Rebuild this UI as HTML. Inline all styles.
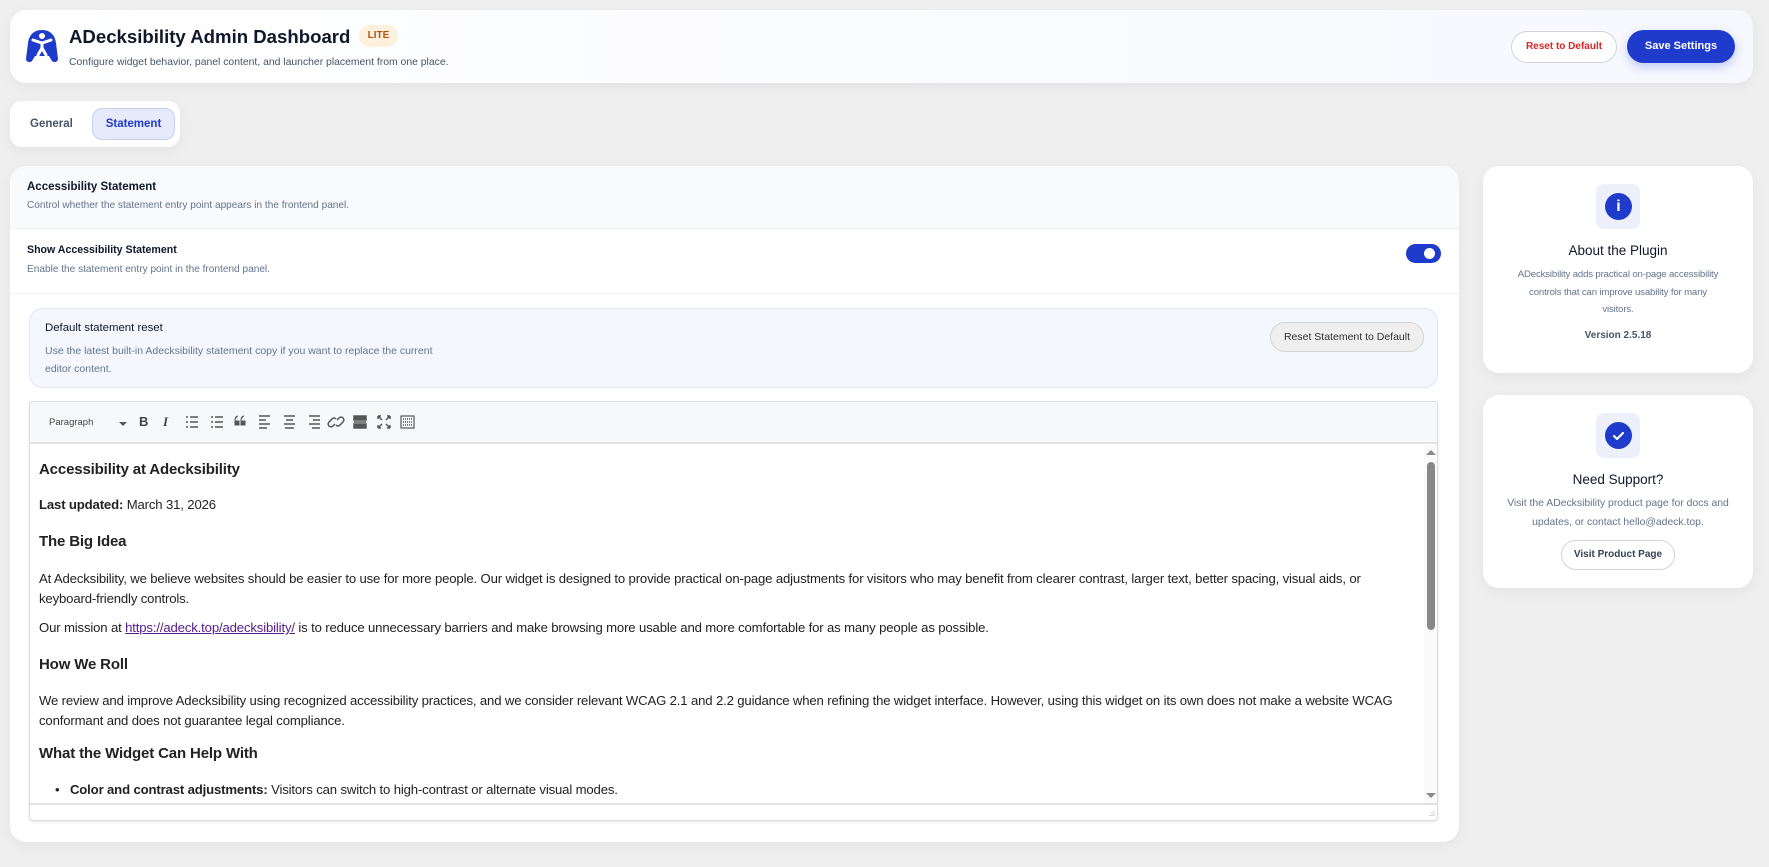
<!DOCTYPE html>
<html><head><meta charset="utf-8"><style>
*{box-sizing:border-box;margin:0;padding:0}
body{width:1769px;height:867px;background:#efefef;font-family:"Liberation Sans",sans-serif;color:#1e293b;position:relative;overflow:hidden}
.abs{position:absolute}
.card{position:absolute;background:#fff;border-radius:16px;box-shadow:0 4px 14px rgba(0,0,0,.05)}
.t{position:absolute;white-space:nowrap}
.ed p,.ed h3,.ed li{position:absolute;left:39px;white-space:nowrap;font-size:13.15px;color:#222;letter-spacing:-.15px}
.ed h3{font-size:15px;font-weight:bold}
</style></head><body>
<!-- header -->
<div class="card" style="left:10px;top:10px;width:1743px;height:73px;background:linear-gradient(90deg,#fff,#f6f8fe)"></div>
<svg class="abs" style="left:26px;top:29px" width="32" height="34" viewBox="0 0 32 34">
<path d="M16 1C7 1 3 7 2 14L0 30c0 3 4 4 6 2l3-5h14l3 5c2 2 6 1 6-2L30 14C29 7 25 1 16 1z" fill="#1f3bcc"/>
<circle cx="16" cy="7" r="3" fill="#fff"/>
<path d="M7 11l9 3 9-3M16 14v6M16 19l-4 7M16 19l4 7" stroke="#fff" stroke-width="3" fill="none" stroke-linecap="round"/>
</svg>
<div class="t" style="left:69px;top:26px;font-size:18.6px;font-weight:bold;color:#0f172a">ADecksibility Admin Dashboard</div>
<div class="abs" style="left:359px;top:25px;width:39px;height:22px;border-radius:12px;background:#fdf0dd;color:#b45309;font-size:10px;font-weight:bold;text-align:center;line-height:22px">LITE</div>
<div class="t" style="left:69px;top:57px;font-size:10.4px;color:#475569">Configure widget behavior, panel content, and launcher placement from one place.</div>
<div class="abs" style="left:1511px;top:31px;width:106px;height:32px;border:1px solid #d1d5db;border-radius:16px;color:#dc2626;font-size:10px;font-weight:bold;text-align:center;line-height:30px;background:#fff">Reset to Default</div>
<div class="abs" style="left:1627px;top:30px;width:108px;height:33px;border-radius:17px;background:#1f3bcc;color:#fff;font-size:11px;font-weight:bold;text-align:center;line-height:33px;box-shadow:0 4px 10px rgba(31,59,204,.25)">Save Settings</div>
<!-- tabs -->
<div class="card" style="left:10px;top:101px;width:170px;height:46px;border-radius:12px"></div>
<div class="t" style="left:30px;top:118px;font-size:11.5px;font-weight:bold;color:#475569">General</div>
<div class="abs" style="left:92px;top:108px;width:83px;height:32px;border-radius:10px;background:#e6eafb;border:1px solid #c7d0f3;color:#1f3bcc;font-size:11.5px;font-weight:bold;text-align:center;line-height:30px">Statement</div>
<!-- main card -->
<div class="card" style="left:10px;top:166px;width:1449px;height:676px;overflow:hidden">
 <div class="abs" style="left:0;top:0;width:1449px;height:63px;background:#f9fafc;border-bottom:1px solid #eef0f3"></div>
 <div class="abs" style="left:0;top:127px;width:1449px;height:1px;background:#eef0f3"></div>
</div>
<div class="t" style="left:27px;top:181px;font-size:11.5px;font-weight:bold;color:#0f172a">Accessibility Statement</div>
<div class="t" style="left:27px;top:200px;font-size:10.1px;color:#64748b">Control whether the statement entry point appears in the frontend panel.</div>
<div class="t" style="left:27px;top:244px;font-size:10.6px;font-weight:bold;color:#0f172a">Show Accessibility Statement</div>
<div class="t" style="left:27px;top:264px;font-size:10.1px;color:#64748b">Enable the statement entry point in the frontend panel.</div>
<div class="abs" style="left:1406px;top:244px;width:35px;height:19px;border-radius:10px;background:#1f3bcc"></div>
<div class="abs" style="left:1424px;top:248px;width:11px;height:11px;border-radius:50%;background:#fff"></div>
<div class="abs" style="left:29px;top:308px;width:1409px;height:80px;border-radius:14px;background:#f4f7fe;border:1px solid #dce4fb"></div>
<div class="t" style="left:45px;top:322px;font-size:11.4px;color:#0f172a">Default statement reset</div>
<div class="t" style="left:45px;top:342px;font-size:10.5px;color:#64748b;line-height:18px">Use the latest built-in Adecksibility statement copy if you want to replace the current<br>editor content.</div>
<div class="abs" style="left:1270px;top:322px;width:154px;height:30px;border-radius:15px;background:#efefef;border:1px solid #d4d4d4;font-size:10.5px;color:#333;text-align:center;line-height:28px">Reset Statement to Default</div>
<!-- editor -->
<div class="abs" style="left:29px;top:401px;width:1409px;height:420px;border:1px solid #dcdcdc;border-radius:4px;background:#fff;overflow:hidden;box-shadow:0 1px 2px rgba(0,0,0,.1)">
 <div class="abs" style="left:0;top:0;width:1409px;height:42px;background:#f7f8fa;border-bottom:2px solid #e2e2e2"></div>
 <div class="abs" style="left:0;top:401px;width:1409px;height:19px;border-top:2px solid #e2e2e2"></div>
 <div class="abs" style="left:1394px;top:43px;width:14px;height:358px;background:#fafafa"></div>
 <div class="abs" style="left:1397px;top:60px;width:8px;height:168px;border-radius:4px;background:#888"></div>
 <div class="abs" style="left:1396px;top:48px;border:5px solid transparent;border-bottom:5px solid #888;border-top:0"></div>
 <div class="abs" style="left:1396px;top:391px;border:5px solid transparent;border-top:5px solid #888;border-bottom:0"></div>
 <svg class="abs" style="left:1396px;top:407px" width="10" height="10"><path d="M8 2v1M6 4v1M8 4v1M4 6v1M6 6v1M8 6v1" stroke="#aaa"/></svg>
</div>
<div class="t" style="left:49px;top:417px;font-size:9.5px;color:#444">Paragraph</div>
<div class="abs" style="left:119px;top:422px;border:4px solid transparent;border-top:4px solid #555;border-bottom:0"></div>
<div class="t" style="left:139px;top:414px;font-size:13px;font-weight:bold;color:#444">B</div>
<div class="t" style="left:163px;top:414px;font-size:13px;font-style:italic;font-family:'Liberation Serif',serif;font-weight:bold;color:#444">I</div>
<svg class="abs" style="left:185px;top:414px" width="230" height="16" viewBox="0 0 230 16" fill="none" stroke="#555" stroke-width="1.5">
<path d="M1 3h2M1 8h2M1 13h2M5 3h8M5 8h8M5 13h8"/>
<path d="M26 3h2M26 8h2M26 13h2M30 3h8M30 8h8M30 13h8" />
<path d="M50 6c0-3 2-4 3-4M50 6v5h4V7h-3M56 6c0-3 2-4 3-4M56 6v5h4V7h-3" fill="#555" stroke-width="1"/>
<path d="M74 2h11M74 6h7M74 10h11M74 14h8"/>
<path d="M99 2h11M101 6h7M99 10h11M100 14h9"/>
<path d="M124 2h11M128 6h7M124 10h11M127 14h8"/>
<path d="M150 10l-2 2a2.5 2.5 0 0 1-4-4l3-3a2.5 2.5 0 0 1 4 0M152 6l2-2a2.5 2.5 0 0 1 4 4l-3 3a2.5 2.5 0 0 1-4 0"/>
<path d="M169 2h12v4h-12zM169 8h12M169 10h12v4h-12z" fill="#555"/>
<path d="M193 2l4 4M205 2l-4 4M193 14l4-4M205 14l-4-4M193 2h3M193 2v3M205 2h-3M205 2v3M193 14h3M193 14v-3M205 14h-3M205 14v-3"/>
<rect x="216" y="2" width="13" height="12" stroke-width="1.2"/><path d="M218 5h9M218 8h9M218 11h9" stroke-dasharray="1 1"/>
</svg>
<div class="ed">
<h3 style="top:461px">Accessibility at Adecksibility</h3>
<p style="top:497px"><b>Last updated:</b> March 31, 2026</p>
<h3 style="top:533px">The Big Idea</h3>
<p style="top:569px;line-height:20px">At Adecksibility, we believe websites should be easier to use for more people. Our widget is designed to provide practical on-page adjustments for visitors who may benefit from clearer contrast, larger text, better spacing, visual aids, or<br>keyboard-friendly controls.</p>
<p style="top:620px">Our mission at <a style="color:#551a8b;text-decoration:underline">https://adeck.top/adecksibility/</a> is to reduce unnecessary barriers and make browsing more usable and more comfortable for as many people as possible.</p>
<h3 style="top:656px">How We Roll</h3>
<p style="top:691px;line-height:20px">We review and improve Adecksibility using recognized accessibility practices, and we consider relevant WCAG 2.1 and 2.2 guidance when refining the widget interface. However, using this widget on its own does not make a website WCAG<br>conformant and does not guarantee legal compliance.</p>
<h3 style="top:745px">What the Widget Can Help With</h3>
<p style="top:782px;left:55px">•&nbsp;&nbsp; <b>Color and contrast adjustments:</b> Visitors can switch to high-contrast or alternate visual modes.</p>
</div>
<!-- side card 1 -->
<div class="card" style="left:1483px;top:166px;width:270px;height:207px"></div>
<div class="abs" style="left:1596px;top:184px;width:44px;height:45px;border-radius:8px;background:#edf0fb"></div>
<div class="abs" style="left:1605px;top:193px;width:27px;height:27px;border-radius:50%;background:#1f3bcc;color:#fff;font-weight:bold;font-size:16px;text-align:center;line-height:27px">i</div>
<div class="t" style="left:1483px;width:270px;text-align:center;top:243px;font-size:13.5px;color:#0f172a">About the Plugin</div>
<div class="abs" style="left:1498px;width:240px;text-align:center;top:266px;font-size:9.6px;letter-spacing:-.15px;color:#64748b;line-height:17.5px">ADecksibility adds practical on-page accessibility<br>controls that can improve usability for many<br>visitors.</div>
<div class="t" style="left:1483px;width:270px;text-align:center;top:330px;font-size:10px;font-weight:bold;color:#475569">Version 2.5.18</div>
<!-- side card 2 -->
<div class="card" style="left:1483px;top:395px;width:270px;height:193px"></div>
<div class="abs" style="left:1596px;top:413px;width:44px;height:45px;border-radius:8px;background:#edf0fb"></div>
<div class="abs" style="left:1605px;top:422px;width:27px;height:27px;border-radius:50%;background:#1f3bcc"></div>
<svg class="abs" style="left:1605px;top:422px" width="27" height="27"><path d="M9 14l3 3 6-6" stroke="#fff" stroke-width="2.2" fill="none" stroke-linecap="round" stroke-linejoin="round"/></svg>
<div class="t" style="left:1483px;width:270px;text-align:center;top:472px;font-size:13.5px;color:#0f172a">Need Support?</div>
<div class="abs" style="left:1494px;width:248px;text-align:center;top:494px;font-size:10.4px;color:#64748b;line-height:19px">Visit the ADecksibility product page for docs and updates, or contact hello@adeck.top.</div>
<div class="abs" style="left:1561px;top:540px;width:114px;height:30px;border-radius:15px;border:1px solid #cfd4dc;background:#fff;font-size:10px;font-weight:bold;color:#334155;text-align:center;line-height:28px">Visit Product Page</div>
</body></html>
